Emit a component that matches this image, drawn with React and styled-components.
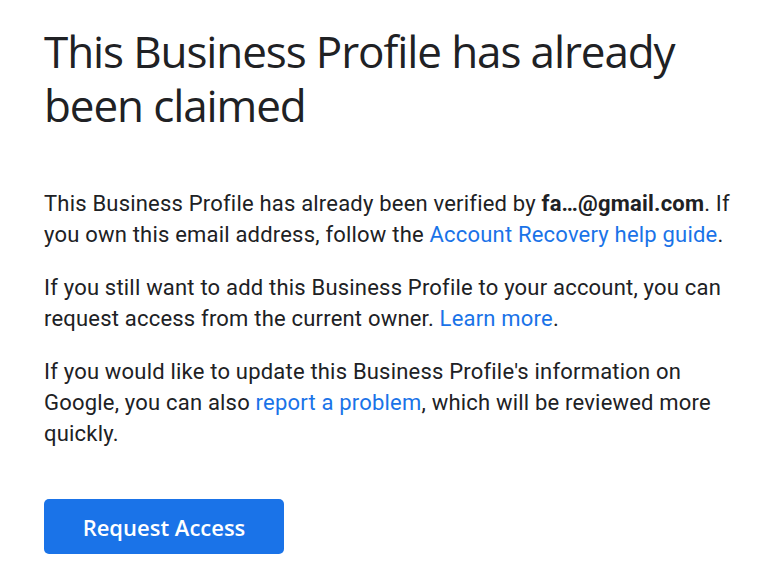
import React from "react";
import styled, { createGlobalStyle } from "styled-components";

const GlobalStyle = createGlobalStyle`
  body {
    margin: 0;
    background: #ffffff;
    font-family: Roboto, "Liberation Sans", Arial, sans-serif;
    color: #202124;
  }
`;

export default function App() {
  return (
    <>
      <GlobalStyle />
      <Container>
        <Title>This Business Profile has already been claimed</Title>
        <Body>
          <Paragraph>
            This Business Profile has already been verified by{" "}
            <strong>fa…@gmail.com</strong>. If you own this email address,
            follow the <Link href="#">Account Recovery help guide</Link>.
          </Paragraph>
          <Paragraph>
            If you still want to add this Business Profile to your account, you
            can request access from the current owner.{" "}
            <Link href="#">Learn more</Link>.
          </Paragraph>
          <Paragraph>
            If you would like to update this Business Profile's information on
            Google, you can also <Link href="#">report a problem</Link>, which
            will be reviewed more quickly.
          </Paragraph>
        </Body>
        <Button type="button">Request Access</Button>
      </Container>
    </>
  );
}

const Container = styled.div`
  display: flex;
  flex-direction: column;
  align-items: flex-start;
  width: 700px;
  padding: 24px 0 0 44px;
`;

const Title = styled.h1`
  font-family: "Open Sans", Roboto, sans-serif;
  font-weight: 400;
  font-size: 44px;
  line-height: 54px;
  letter-spacing: -1.1px;
  margin: 0 0 56px;
  color: #202124;
`;

const Body = styled.div`
  display: flex;
  flex-direction: column;
  gap: 22px;
`;

const Paragraph = styled.p`
  margin: 0;
  font-size: 22px;
  line-height: 31px;
  letter-spacing: 0.2px;
  color: #202124;

  strong {
    font-weight: 700;
  }
`;

const Link = styled.a`
  color: #1a73e8;
  text-decoration: none;
`;

const Button = styled.button`
  margin-top: 50px;
  width: 240px;
  height: 55px;
  border: none;
  border-radius: 5px;
  background: #1a73e8;
  color: #ffffff;
  font-family: "Open Sans", Roboto, sans-serif;
  font-weight: 600;
  font-size: 22px;
  cursor: pointer;
`;
